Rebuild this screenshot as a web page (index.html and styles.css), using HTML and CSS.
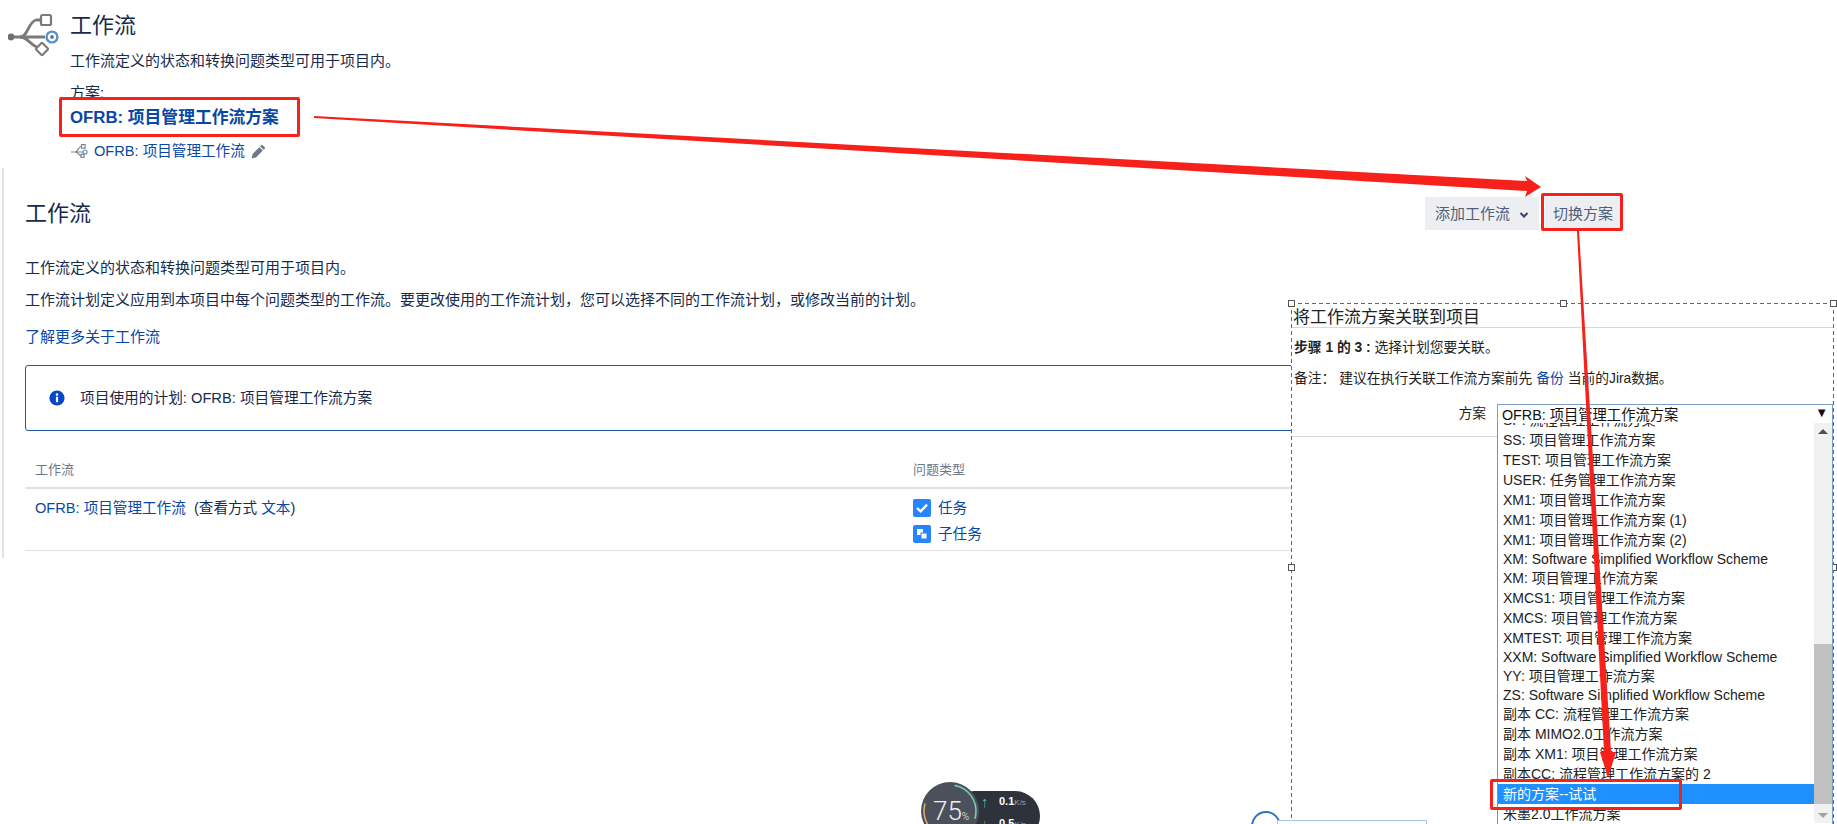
FILE: index.html
```html
<!DOCTYPE html>
<html>
  <head>
    <meta charset="UTF-8">
    <title>工作流</title>
    <link rel="stylesheet" href="styles.css">
  </head>
  <body>
    <header class="project-head">
      <svg class="head-icon" width="52" height="44" viewBox="0 0 52 44">
        <g fill="none" stroke="#7a7a7a" stroke-width="2.8">
          <path d="M3 24H37"/>
          <path d="M12 24C20 24 20 9 28 7H32"/>
          <path d="M12 24C20 24 22 32 29 34"/>
          <rect x="33" y="2" width="10" height="10" rx="1.5" stroke-width="2.2"/>
          <rect x="29.5" y="31.5" width="9" height="9" rx="1" stroke-width="2.2" transform="rotate(45 34 36)"/>
        </g>
        <circle cx="3" cy="24" r="3.4" fill="#6f6f6f"/>
        <circle cx="44" cy="24" r="5.4" fill="#fff" stroke="#5b8fc7" stroke-width="2.4"/>
        <circle cx="44" cy="24" r="1.9" fill="#3f7fc0"/>
      </svg>
      <div class="head-text">
        <h1 class="head-title">工作流</h1>
        <p class="head-desc">工作流定义的状态和转换问题类型可用于项目内。</p>
        <p class="head-label">方案:</p>
        <a class="head-scheme">OFRB: 项目管理工作流方案</a>
        <div class="head-flow">
          <svg width="18" height="14" viewBox="0 0 18 14">
            <g fill="none" stroke="#7d8794" stroke-width="1.2">
              <path d="M1 8H13M5 8C8 8 8 3 11 2.5M5 8C8 8 9 11 11 12"/>
              <rect x="11.5" y="0.6" width="3.6" height="3.6"/>
              <circle cx="15" cy="8" r="2" stroke="#5b8fc7"/>
              <rect x="11" y="10.4" width="3" height="3"/>
            </g>
          </svg>
          <a>OFRB: 项目管理工作流</a>
          <svg class="pencil" width="15" height="15" viewBox="0 0 15 15">
            <path d="M11 .6l3.4 3.4-1.8 1.8-3.4-3.4zM8.4 3.2l3.4 3.4L5 13.4.6 14.4l1-4.4z" fill="#6f7684"/>
          </svg>
        </div>
      </div>
    </header>

    <main class="workflow">
      <div class="workflow-top">
        <h2 class="workflow-title">工作流</h2>
        <div class="btn-row">
          <button class="btn btn-add">添加工作流
            <svg width="10" height="8" viewBox="0 0 10 8"><path d="M1.5 2l3.5 3.5L8.5 2" fill="none" stroke="#344563" stroke-width="2"/></svg>
          </button>
          <button class="btn btn-switch">切换方案</button>
        </div>
      </div>
      <p class="para para-first">工作流定义的状态和转换问题类型可用于项目内。</p>
      <p class="para">工作流计划定义应用到本项目中每个问题类型的工作流。要更改使用的工作流计划，您可以选择不同的工作流计划，或修改当前的计划。</p>
      <p class="para para-link"><a>了解更多关于工作流</a></p>

      <div class="info-box">
        <svg width="16" height="16" viewBox="0 0 16 16">
          <circle cx="8" cy="8" r="7.6" fill="#0747c9"/>
          <rect x="6.9" y="6.8" width="2.2" height="5.4" fill="#fff"/>
          <circle cx="8" cy="4.6" r="1.3" fill="#fff"/>
        </svg>
        <span>项目使用的计划: OFRB: 项目管理工作流方案</span>
      </div>

      <div class="flow-table">
        <div class="table-head">
          <div class="col-name">工作流</div>
          <div>问题类型</div>
        </div>
        <div class="table-row">
          <div class="col-name"><a>OFRB: 项目管理工作流</a>&nbsp;&nbsp;(查看方式 <a>文本</a>)</div>
          <div class="issue-types">
            <a class="issue-type">
              <svg width="18" height="18" viewBox="0 0 18 18">
                <rect width="18" height="18" rx="2" fill="#2684ff"/>
                <path d="M4 9l3.6 3.4L14 5.6" fill="none" stroke="#fff" stroke-width="2.4"/>
              </svg>
              任务
            </a>
            <a class="issue-type">
              <svg width="18" height="18" viewBox="0 0 18 18">
                <rect width="18" height="18" rx="2" fill="#2684ff"/>
                <rect x="4" y="4" width="6" height="6" fill="#fff"/>
                <rect x="8" y="8" width="6" height="6" fill="#fff" stroke="#2684ff"/>
              </svg>
              子任务
            </a>
          </div>
        </div>
      </div>
    </main>

    <section class="assoc-panel">
      <i class="handle handle-tl"></i>
      <i class="handle handle-tc"></i>
      <i class="handle handle-tr"></i>
      <i class="handle handle-ml"></i>
      <i class="handle handle-mr"></i>
      <h3 class="assoc-title">将工作流方案关联到项目</h3>
      <p class="assoc-step"><b>步骤 1 的 3 :</b> 选择计划您要关联。</p>
      <p class="assoc-note">备注： 建议在执行关联工作流方案前先 <a>备份</a> 当前的Jira数据。</p>
      <div class="assoc-field">
        <label class="assoc-label">方案</label>
        <div class="fake-select">
          <span>OFRB: 项目管理工作流方案</span>
          <span class="fake-arrow">▼</span>
        </div>
      </div>
      <div class="drop">
        <div class="drop-list">
          <div class="opt opt-cut">SP: 流程管理工作流方案</div>
          <div class="opt">SS: 项目管理工作流方案</div>
          <div class="opt">TEST: 项目管理工作流方案</div>
          <div class="opt">USER: 任务管理工作流方案</div>
          <div class="opt">XM1: 项目管理工作流方案</div>
          <div class="opt">XM1: 项目管理工作流方案 (1)</div>
          <div class="opt">XM1: 项目管理工作流方案 (2)</div>
          <div class="opt opt-latin">XM: Software Simplified Workflow Scheme</div>
          <div class="opt">XM: 项目管理工作流方案</div>
          <div class="opt">XMCS1: 项目管理工作流方案</div>
          <div class="opt">XMCS: 项目管理工作流方案</div>
          <div class="opt">XMTEST: 项目管理工作流方案</div>
          <div class="opt opt-latin">XXM: Software Simplified Workflow Scheme</div>
          <div class="opt">YY: 项目管理工作流方案</div>
          <div class="opt opt-latin">ZS: Software Simplified Workflow Scheme</div>
          <div class="opt">副本 CC: 流程管理工作流方案</div>
          <div class="opt">副本 MIMO2.0工作流方案</div>
          <div class="opt">副本 XM1: 项目管理工作流方案</div>
          <div class="opt">副本CC: 流程管理工作流方案的 2</div>
          <div class="opt opt-on">新的方案--试试</div>
          <div class="opt">米墨2.0工作流方案</div>
        </div>
        <div class="drop-scroll">
          <span class="scroll-up"></span>
          <span class="scroll-thumb"></span>
          <span class="scroll-down"></span>
        </div>
      </div>
    </section>

    <div class="speed">
      <div class="speed-pill">
        <div class="speed-line"><b class="up">↑</b> 0.1<small>K/s</small></div>
        <div class="speed-line"><b class="down">↓</b> 0.5<small>K/s</small></div>
      </div>
      <div class="speed-dial">
        <svg width="58" height="58" viewBox="0 0 58 58">
          <circle cx="29" cy="29" r="26" fill="none" stroke="#72cdb4" stroke-width="1.6" stroke-dasharray="44 200" transform="rotate(-80 29 29)"/>
          <circle cx="29" cy="29" r="26" fill="none" stroke="#d9a566" stroke-width="1.6" stroke-dasharray="30 200" transform="rotate(130 29 29)"/>
        </svg>
        <span class="speed-num">75<small>%</small></span>
      </div>
    </div>

    <div class="mini-bar">
      <i class="mini-ring"></i>
      <div class="mini-tools"><i></i><i></i><i></i><i></i><i></i><i></i></div>
    </div>

    <!-- annotations drawn on top of the screenshot -->
    <svg class="marks" width="1837" height="824" viewBox="0 0 1837 824">
      <polygon points="314,116 1527,181 1525,176 1541,187 1525,197 1527,191 314,118" fill="#f5211a"/>
      <polygon points="1577,231 1579,231 1611,752 1616,752 1608,778 1600,752 1604,752" fill="#f5211a"/>
    </svg>
    <div class="red-box red-scheme"></div>
    <div class="red-box red-switch"></div>
    <div class="red-box red-new"></div>
  </body>
</html>
```

FILE: styles.css
```css
html, body {
  margin: 0;
  height: 100%;
}

body {
  position: relative;
  overflow: hidden;
  background: #fff;
  color: #172b4d;
  font-family: "Liberation Sans", "Noto Sans CJK SC", sans-serif;
  font-size: 15px;
  line-height: 20px;
}

p, h1, h2, h3 {
  margin: 0;
  font-weight: normal;
}

a {
  color: #0747a6;
}

/* project header */
.project-head {
  display: flex;
  height: 168px;
  box-sizing: border-box;
  padding: 11px 0 0 8px;
}

.head-icon {
  margin: 2px 10px 0 0;
  flex: none;
}

.head-title {
  font-size: 22px;
  line-height: 30px;
}

.head-desc {
  margin-top: 10px;
}

.head-label {
  margin-top: 12px;
}

.head-scheme {
  display: block;
  margin-top: 5px;
  font-size: 16.8px;
  font-weight: bold;
}

.head-flow {
  display: flex;
  align-items: center;
  gap: 6px;
  margin-top: 13px;
  font-size: 14.6px;
}

/* workflow section */
.workflow {
  box-sizing: border-box;
  width: 1619px;
  height: 390px;
  margin-left: 2px;
  padding-left: 21px;
  border-left: 2px solid #dfe1e6;
}

.workflow-top {
  display: flex;
  justify-content: space-between;
  align-items: center;
  padding-top: 29px;
}

.workflow-title {
  font-size: 22px;
  line-height: 33px;
}

.btn-row {
  display: flex;
  gap: 6px;
}

.btn {
  height: 33px;
  border: 0;
  background: #eceef1;
  color: #505f79;
  font: inherit;
  padding: 0;
}

.btn-add {
  width: 114px;
}

.btn-add svg {
  margin-left: 5px;
}

.btn-switch {
  width: 76px;
}

.para {
  margin-top: 12px;
}

.para-first {
  margin-top: 28px;
}

.para-link {
  margin-top: 17px;
}

.info-box {
  display: flex;
  align-items: center;
  gap: 15px;
  box-sizing: border-box;
  height: 66px;
  margin-top: 18px;
  padding-left: 23px;
  border: 1px solid #1f5a9e;
  border-radius: 3px;
  font-size: 14.7px;
}

.flow-table {
  margin-top: 19px;
  font-size: 14.6px;
}

.table-head, .table-row {
  display: flex;
}

.table-head {
  height: 39px;
  padding-top: 2px;
  box-sizing: border-box;
  align-items: center;
  border-bottom: 2px solid #dfe1e6;
  color: #6b778c;
  font-size: 13px;
}

.table-row {
  height: 62px;
  padding-top: 9px;
  box-sizing: border-box;
  border-bottom: 1px solid #dfe1e6;
}

.col-name {
  width: 888px;
  padding-left: 10px;
  box-sizing: border-box;
}

.issue-types {
  display: flex;
  flex-direction: column;
  gap: 6px;
}

.issue-type {
  display: flex;
  align-items: center;
  gap: 7px;
}

/* selection frame and dropdown on the right */
.assoc-panel {
  position: absolute;
  left: 1291px;
  top: 303px;
  width: 543px;
  height: 540px;
  box-sizing: border-box;
  padding: 0 1px;
  background:
    linear-gradient(90deg, #2f72ad 4px, transparent 4px) 0 0 / 7px 1px repeat-x,
    linear-gradient(#2f72ad 4px, transparent 4px) 0 0 / 1px 7px repeat-y,
    linear-gradient(#2f72ad 4px, transparent 4px) 100% 0 / 1px 7px repeat-y,
    #fff;
  color: #222;
  font-size: 13.8px;
}

.handle {
  position: absolute;
  width: 5px;
  height: 5px;
  background: #fff;
  border: 1px solid #555;
}

.handle-tl { left: -3px; top: -3px; }
.handle-tc { left: 269px; top: -3px; }
.handle-tr { right: -3px; top: -3px; }
.handle-ml { left: -3px; top: 261px; }
.handle-mr { right: -3px; top: 261px; }

.assoc-title {
  height: 24px;
  padding-left: 1px;
  border-bottom: 1px solid #d5d9de;
  font-size: 17px;
  line-height: 30px;
}

.assoc-step {
  margin-top: 10px;
  padding-left: 2px;
}

.assoc-note {
  margin-top: 11px;
  padding-left: 2px;
}

.assoc-note a {
  color: #0747a6;
}

.assoc-field {
  display: flex;
  justify-content: flex-end;
  align-items: flex-start;
  height: 32px;
  margin-top: 15px;
  border-bottom: 1px solid #d5d9de;
}

.assoc-label {
  margin-right: 11px;
  line-height: 19px;
}

.fake-select {
  display: flex;
  justify-content: space-between;
  box-sizing: border-box;
  width: 336px;
  height: 20px;
  padding: 0 4px;
  border: 1px solid #7c9cc9;
  line-height: 20px;
  font-size: 14.3px;
  color: #111;
}

.fake-arrow {
  font-size: 13px;
  line-height: 16px;
}

.drop {
  position: absolute;
  left: 206px;
  top: 120px;
  display: flex;
  width: 336px;
  height: 420px;
  box-sizing: border-box;
  background: #fff;
  border-left: 1px solid #7c8fc0;
  border-right: 1px solid #7c9cc9;
  font-size: 14px;
  color: #222;
}

.drop-list {
  flex: 1;
  overflow: hidden;
}

.opt {
  height: 20px;
  padding-left: 5px;
  line-height: 20px;
  white-space: nowrap;
}

.opt-cut {
  margin-top: -13px;
}

.opt-latin {
  height: 18px;
  line-height: 18px;
}

.opt-on {
  background: #1e90ff;
  color: #fff;
}

.drop-scroll {
  position: relative;
  width: 18px;
  height: 400px;
  background: #f1f1f1;
}

.scroll-up, .scroll-down {
  position: absolute;
  left: 4px;
  width: 0;
  height: 0;
  border-left: 5px solid transparent;
  border-right: 5px solid transparent;
}

.scroll-up {
  top: 6px;
  border-bottom: 5px solid #505050;
}

.scroll-down {
  bottom: 5px;
  border-top: 5px solid #a3a3a3;
}

.scroll-thumb {
  position: absolute;
  left: 0;
  right: 0;
  top: 221px;
  height: 160px;
  background: #c1c1c1;
}

/* speed widget at the bottom */
.speed {
  position: absolute;
  left: 921px;
  top: 782px;
  width: 120px;
  height: 60px;
}

.speed-pill {
  position: absolute;
  left: 28px;
  top: 9px;
  width: 91px;
  height: 50px;
  box-sizing: border-box;
  padding: 0 0 0 50px;
  border-radius: 25px;
  background: #2e323a;
  color: #fff;
  font-size: 11px;
  font-weight: bold;
  line-height: 21px;
}

.speed-line {
  white-space: nowrap;
}

.speed-line small {
  font-size: 8px;
  font-weight: normal;
  color: #9aa0a8;
}

.speed-line b {
  position: absolute;
  left: 32px;
  font-size: 15px;
}

.up { color: #5bb7b0; }
.down { color: #58b368; }

.speed-dial {
  position: absolute;
  left: 0;
  top: 0;
  width: 58px;
  height: 58px;
  border-radius: 50%;
  background: #4c505a;
}

.speed-dial svg {
  position: absolute;
  left: 0;
  top: 0;
}

.speed-num {
  position: absolute;
  left: 12px;
  top: 15px;
  color: #eef0f2;
  font-size: 26px;
  font-family: Roboto, "Liberation Sans", sans-serif;
  font-weight: 300;
  line-height: 28px;
}

.speed-num small {
  font-size: 10px;
}

.mini-bar {
  position: absolute;
  left: 1251px;
  top: 811px;
  width: 176px;
  height: 30px;
}

.mini-ring {
  position: absolute;
  left: 0;
  top: 0;
  width: 26px;
  height: 26px;
  border: 2px solid #2d6fc4;
  border-radius: 50%;
  background: #fff;
}

.mini-tools {
  position: absolute;
  left: 26px;
  right: 0;
  top: 9px;
  height: 22px;
  display: flex;
  justify-content: space-around;
  padding-top: 3px;
  box-sizing: border-box;
  border: 1px solid #a9c4e4;
  background: #fff;
}

.mini-tools i {
  width: 4px;
  height: 6px;
  background: #3a78c2;
}

/* red annotations */
.marks {
  position: absolute;
  left: 0;
  top: 0;
}

.red-box {
  position: absolute;
  box-sizing: border-box;
  border: 3px solid #f5211a;
  border-radius: 2px;
}

.red-scheme {
  left: 59px;
  top: 97px;
  width: 241px;
  height: 40px;
}

.red-switch {
  left: 1541px;
  top: 193px;
  width: 82px;
  height: 38px;
}

.red-new {
  left: 1490px;
  top: 779px;
  width: 192px;
  height: 31px;
}
```
